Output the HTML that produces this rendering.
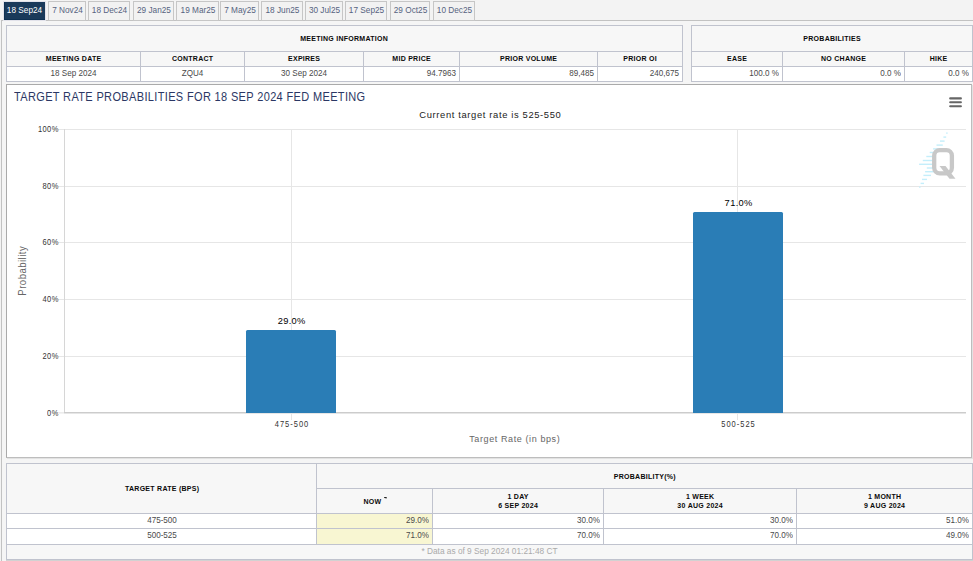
<!DOCTYPE html><html><head><meta charset="utf-8"><style>html,body{margin:0;padding:0;}body{width:973px;height:561px;overflow:hidden;position:relative;background:#f3f3f3;font-family:"Liberation Sans",sans-serif;}div{box-sizing:border-box}</style></head><body>
<div style="position:absolute;left:1px;top:20px;width:1000px;height:581px;border:1px solid #c2c2c2;background:#f5f5f5"></div>
<div style="position:absolute;left:3px;top:1px;width:43px;height:20px;background:#e2e2ea"></div>
<div style="position:absolute;left:4px;top:2px;width:41px;height:18px;background:#1a3a5a;border-left:1px solid #0f3152;border-bottom:1px solid #0f3152"></div>
<div style="position:absolute;left:-475.50px;width:1000px;text-align:center;top:5.90px;font-size:8.25px;line-height:9.479px;font-weight:normal;white-space:nowrap;letter-spacing:0px;transform:scale(1.0,1.05);transform-origin:50% 7.60px;color:#fff">18 Sep24</div>
<div style="position:absolute;left:48px;top:1px;width:38px;height:20px;border:1px solid #c6c6c6;background:#f2f2f2"></div>
<div style="position:absolute;left:-432.50px;width:1000px;text-align:center;top:5.90px;font-size:8.25px;line-height:9.479px;font-weight:normal;white-space:nowrap;letter-spacing:0px;transform:scale(1.0,1.05);transform-origin:50% 7.60px;color:#56637f">7 Nov24</div>
<div style="position:absolute;left:88px;top:1px;width:42px;height:20px;border:1px solid #c6c6c6;background:#f2f2f2"></div>
<div style="position:absolute;left:-390.50px;width:1000px;text-align:center;top:5.90px;font-size:8.25px;line-height:9.479px;font-weight:normal;white-space:nowrap;letter-spacing:0px;transform:scale(1.0,1.05);transform-origin:50% 7.60px;color:#56637f">18 Dec24</div>
<div style="position:absolute;left:133px;top:1px;width:41px;height:20px;border:1px solid #c6c6c6;background:#f2f2f2"></div>
<div style="position:absolute;left:-346.00px;width:1000px;text-align:center;top:5.90px;font-size:8.25px;line-height:9.479px;font-weight:normal;white-space:nowrap;letter-spacing:0px;transform:scale(1.0,1.05);transform-origin:50% 7.60px;color:#56637f">29 Jan25</div>
<div style="position:absolute;left:176px;top:1px;width:43px;height:20px;border:1px solid #c6c6c6;background:#f2f2f2"></div>
<div style="position:absolute;left:-302.00px;width:1000px;text-align:center;top:5.90px;font-size:8.25px;line-height:9.479px;font-weight:normal;white-space:nowrap;letter-spacing:0px;transform:scale(1.0,1.05);transform-origin:50% 7.60px;color:#56637f">19 Mar25</div>
<div style="position:absolute;left:220px;top:1px;width:39px;height:20px;border:1px solid #c6c6c6;background:#f2f2f2"></div>
<div style="position:absolute;left:-260.00px;width:1000px;text-align:center;top:5.90px;font-size:8.25px;line-height:9.479px;font-weight:normal;white-space:nowrap;letter-spacing:0px;transform:scale(1.0,1.05);transform-origin:50% 7.60px;color:#56637f">7 May25</div>
<div style="position:absolute;left:261px;top:1px;width:42px;height:20px;border:1px solid #c6c6c6;background:#f2f2f2"></div>
<div style="position:absolute;left:-217.50px;width:1000px;text-align:center;top:5.90px;font-size:8.25px;line-height:9.479px;font-weight:normal;white-space:nowrap;letter-spacing:0px;transform:scale(1.0,1.05);transform-origin:50% 7.60px;color:#56637f">18 Jun25</div>
<div style="position:absolute;left:305px;top:1px;width:38px;height:20px;border:1px solid #c6c6c6;background:#f2f2f2"></div>
<div style="position:absolute;left:-175.50px;width:1000px;text-align:center;top:5.90px;font-size:8.25px;line-height:9.479px;font-weight:normal;white-space:nowrap;letter-spacing:0px;transform:scale(1.0,1.05);transform-origin:50% 7.60px;color:#56637f">30 Jul25</div>
<div style="position:absolute;left:345px;top:1px;width:42px;height:20px;border:1px solid #c6c6c6;background:#f2f2f2"></div>
<div style="position:absolute;left:-133.50px;width:1000px;text-align:center;top:5.90px;font-size:8.25px;line-height:9.479px;font-weight:normal;white-space:nowrap;letter-spacing:0px;transform:scale(1.0,1.05);transform-origin:50% 7.60px;color:#56637f">17 Sep25</div>
<div style="position:absolute;left:390px;top:1px;width:40px;height:20px;border:1px solid #c6c6c6;background:#f2f2f2"></div>
<div style="position:absolute;left:-89.50px;width:1000px;text-align:center;top:5.90px;font-size:8.25px;line-height:9.479px;font-weight:normal;white-space:nowrap;letter-spacing:0px;transform:scale(1.0,1.05);transform-origin:50% 7.60px;color:#56637f">29 Oct25</div>
<div style="position:absolute;left:433px;top:1px;width:42px;height:20px;border:1px solid #c6c6c6;background:#f2f2f2"></div>
<div style="position:absolute;left:-45.50px;width:1000px;text-align:center;top:5.90px;font-size:8.25px;line-height:9.479px;font-weight:normal;white-space:nowrap;letter-spacing:0px;transform:scale(1.0,1.05);transform-origin:50% 7.60px;color:#56637f">10 Dec25</div>
<div style="position:absolute;left:6px;top:25px;width:677px;height:57px;border:1px solid #c0c3ce;background:#f7f7f7"></div>
<div style="position:absolute;left:7px;top:67px;width:675px;height:14px;background:#fff"></div>
<div style="position:absolute;left:6px;top:51px;width:677px;height:1px;background:#c0c3ce"></div>
<div style="position:absolute;left:6px;top:66px;width:677px;height:1px;background:#c0c3ce"></div>
<div style="position:absolute;left:140px;top:51px;width:1px;height:31px;background:#c0c3ce"></div>
<div style="position:absolute;left:244px;top:51px;width:1px;height:31px;background:#c0c3ce"></div>
<div style="position:absolute;left:363px;top:51px;width:1px;height:31px;background:#c0c3ce"></div>
<div style="position:absolute;left:459px;top:51px;width:1px;height:31px;background:#c0c3ce"></div>
<div style="position:absolute;left:597px;top:51px;width:1px;height:31px;background:#c0c3ce"></div>
<div style="position:absolute;left:-155.87px;width:1000px;text-align:center;top:35.05px;font-size:7px;line-height:8.043px;font-weight:bold;white-space:nowrap;letter-spacing:0.27px;color:#0a0a0a">MEETING INFORMATION</div>
<div style="position:absolute;left:-426.37px;width:1000px;text-align:center;top:55.05px;font-size:7px;line-height:8.043px;font-weight:bold;white-space:nowrap;letter-spacing:0.27px;color:#0a0a0a">MEETING DATE</div>
<div style="position:absolute;left:-426.50px;width:1000px;text-align:center;top:69.04px;font-size:8.1px;line-height:9.307px;font-weight:normal;white-space:nowrap;letter-spacing:0px;transform:scale(1.0,1.06);transform-origin:50% 7.46px;color:#4a4a4a">18 Sep 2024</div>
<div style="position:absolute;left:-307.37px;width:1000px;text-align:center;top:55.05px;font-size:7px;line-height:8.043px;font-weight:bold;white-space:nowrap;letter-spacing:0.27px;color:#0a0a0a">CONTRACT</div>
<div style="position:absolute;left:-307.50px;width:1000px;text-align:center;top:69.04px;font-size:8.1px;line-height:9.307px;font-weight:normal;white-space:nowrap;letter-spacing:0px;transform:scale(1.0,1.06);transform-origin:50% 7.46px;color:#4a4a4a">ZQU4</div>
<div style="position:absolute;left:-195.87px;width:1000px;text-align:center;top:55.05px;font-size:7px;line-height:8.043px;font-weight:bold;white-space:nowrap;letter-spacing:0.27px;color:#0a0a0a">EXPIRES</div>
<div style="position:absolute;left:-196.00px;width:1000px;text-align:center;top:69.04px;font-size:8.1px;line-height:9.307px;font-weight:normal;white-space:nowrap;letter-spacing:0px;transform:scale(1.0,1.06);transform-origin:50% 7.46px;color:#4a4a4a">30 Sep 2024</div>
<div style="position:absolute;left:-88.36px;width:1000px;text-align:center;top:55.05px;font-size:7px;line-height:8.043px;font-weight:bold;white-space:nowrap;letter-spacing:0.27px;color:#0a0a0a">MID PRICE</div>
<div style="position:absolute;right:517.00px;top:69.04px;font-size:8.1px;line-height:9.307px;font-weight:normal;white-space:nowrap;letter-spacing:0px;transform:scale(1.0,1.06);transform-origin:100% 7.46px;color:#4a4a4a">94.7963</div>
<div style="position:absolute;left:28.64px;width:1000px;text-align:center;top:55.05px;font-size:7px;line-height:8.043px;font-weight:bold;white-space:nowrap;letter-spacing:0.27px;color:#0a0a0a">PRIOR VOLUME</div>
<div style="position:absolute;right:379.00px;top:69.04px;font-size:8.1px;line-height:9.307px;font-weight:normal;white-space:nowrap;letter-spacing:0px;transform:scale(1.0,1.06);transform-origin:100% 7.46px;color:#4a4a4a">89,485</div>
<div style="position:absolute;left:140.13px;width:1000px;text-align:center;top:55.05px;font-size:7px;line-height:8.043px;font-weight:bold;white-space:nowrap;letter-spacing:0.27px;color:#0a0a0a">PRIOR OI</div>
<div style="position:absolute;right:294.00px;top:69.04px;font-size:8.1px;line-height:9.307px;font-weight:normal;white-space:nowrap;letter-spacing:0px;transform:scale(1.0,1.06);transform-origin:100% 7.46px;color:#4a4a4a">240,675</div>
<div style="position:absolute;left:691px;top:25px;width:282px;height:57px;border:1px solid #c0c3ce;background:#f7f7f7"></div>
<div style="position:absolute;left:692px;top:67px;width:280px;height:14px;background:#fff"></div>
<div style="position:absolute;left:691px;top:51px;width:282px;height:1px;background:#c0c3ce"></div>
<div style="position:absolute;left:691px;top:66px;width:282px;height:1px;background:#c0c3ce"></div>
<div style="position:absolute;left:782px;top:51px;width:1px;height:31px;background:#c0c3ce"></div>
<div style="position:absolute;left:904px;top:51px;width:1px;height:31px;background:#c0c3ce"></div>
<div style="position:absolute;left:332.13px;width:1000px;text-align:center;top:35.05px;font-size:7px;line-height:8.043px;font-weight:bold;white-space:nowrap;letter-spacing:0.27px;color:#0a0a0a">PROBABILITIES</div>
<div style="position:absolute;left:237.13px;width:1000px;text-align:center;top:55.05px;font-size:7px;line-height:8.043px;font-weight:bold;white-space:nowrap;letter-spacing:0.27px;color:#0a0a0a">EASE</div>
<div style="position:absolute;right:194.00px;top:69.04px;font-size:8.1px;line-height:9.307px;font-weight:normal;white-space:nowrap;letter-spacing:0px;transform:scale(1.0,1.06);transform-origin:100% 7.46px;color:#4a4a4a">100.0 %</div>
<div style="position:absolute;left:343.63px;width:1000px;text-align:center;top:55.05px;font-size:7px;line-height:8.043px;font-weight:bold;white-space:nowrap;letter-spacing:0.27px;color:#0a0a0a">NO CHANGE</div>
<div style="position:absolute;right:72.00px;top:69.04px;font-size:8.1px;line-height:9.307px;font-weight:normal;white-space:nowrap;letter-spacing:0px;transform:scale(1.0,1.06);transform-origin:100% 7.46px;color:#4a4a4a">0.0 %</div>
<div style="position:absolute;left:438.63px;width:1000px;text-align:center;top:55.05px;font-size:7px;line-height:8.043px;font-weight:bold;white-space:nowrap;letter-spacing:0.27px;color:#0a0a0a">HIKE</div>
<div style="position:absolute;right:4.00px;top:69.04px;font-size:8.1px;line-height:9.307px;font-weight:normal;white-space:nowrap;letter-spacing:0px;transform:scale(1.0,1.06);transform-origin:100% 7.46px;color:#4a4a4a">0.0 %</div>
<div style="position:absolute;left:6px;top:84px;width:966px;height:374px;border:1px solid #aaaaaa;border-right-color:#bdbdbd;border-bottom-color:#bdbdbd;background:#fff"></div>
<div style="position:absolute;left:7px;top:458px;width:966px;height:1px;background:#e2e2e2"></div>
<div style="position:absolute;left:972px;top:85px;width:1px;height:374px;background:#e2e2e2"></div>
<div style="position:absolute;left:14px;top:91.37px;font-size:11px;line-height:12.639px;font-weight:normal;white-space:nowrap;letter-spacing:0.35px;transform:scale(1.0,1.13);transform-origin:0 10.13px;color:#2b3764">TARGET RATE PROBABILITIES FOR 18 SEP 2024 FED MEETING</div>
<svg style="position:absolute;left:940px;top:90px" width="30" height="25"><line x1="10.2" y1="8.400000000000006" x2="20.9" y2="8.400000000000006" stroke="#666" stroke-width="2.1" stroke-linecap="round"/><line x1="10.2" y1="12.299999999999997" x2="20.9" y2="12.299999999999997" stroke="#666" stroke-width="2.1" stroke-linecap="round"/><line x1="10.2" y1="16.200000000000003" x2="20.9" y2="16.200000000000003" stroke="#666" stroke-width="2.1" stroke-linecap="round"/></svg>
<div style="position:absolute;left:-9.68px;width:1000px;text-align:center;top:109.84px;font-size:9.4px;line-height:10.801px;font-weight:normal;white-space:nowrap;letter-spacing:0.64px;transform:scale(1.0,1.04);transform-origin:50% 8.66px;color:#222">Current target rate is 525-550</div>
<div style="position:absolute;left:58px;top:129px;width:908px;height:1px;background:#e6e6e6"></div>
<div style="position:absolute;right:914.35px;top:125.59px;font-size:7.5px;line-height:8.617px;font-weight:normal;white-space:nowrap;letter-spacing:0.35px;transform:scale(1.0,1.15);transform-origin:100% 6.91px;color:#333">100%</div>
<div style="position:absolute;left:58px;top:186px;width:908px;height:1px;background:#e6e6e6"></div>
<div style="position:absolute;right:914.35px;top:182.59px;font-size:7.5px;line-height:8.617px;font-weight:normal;white-space:nowrap;letter-spacing:0.35px;transform:scale(1.0,1.15);transform-origin:100% 6.91px;color:#333">80%</div>
<div style="position:absolute;left:58px;top:242px;width:908px;height:1px;background:#e6e6e6"></div>
<div style="position:absolute;right:914.35px;top:238.59px;font-size:7.5px;line-height:8.617px;font-weight:normal;white-space:nowrap;letter-spacing:0.35px;transform:scale(1.0,1.15);transform-origin:100% 6.91px;color:#333">60%</div>
<div style="position:absolute;left:58px;top:299px;width:908px;height:1px;background:#e6e6e6"></div>
<div style="position:absolute;right:914.35px;top:295.59px;font-size:7.5px;line-height:8.617px;font-weight:normal;white-space:nowrap;letter-spacing:0.35px;transform:scale(1.0,1.15);transform-origin:100% 6.91px;color:#333">40%</div>
<div style="position:absolute;left:58px;top:356px;width:908px;height:1px;background:#e6e6e6"></div>
<div style="position:absolute;right:914.35px;top:352.59px;font-size:7.5px;line-height:8.617px;font-weight:normal;white-space:nowrap;letter-spacing:0.35px;transform:scale(1.0,1.15);transform-origin:100% 6.91px;color:#333">20%</div>
<div style="position:absolute;right:914.35px;top:409.59px;font-size:7.5px;line-height:8.617px;font-weight:normal;white-space:nowrap;letter-spacing:0.35px;transform:scale(1.0,1.15);transform-origin:100% 6.91px;color:#333">0%</div>
<div style="position:absolute;left:291px;top:129px;width:1px;height:291px;background:#e6e6e6"></div>
<div style="position:absolute;left:737px;top:129px;width:1px;height:291px;background:#e6e6e6"></div>
<div style="position:absolute;left:64px;top:129px;width:1px;height:284px;background:#d6d6d6"></div>
<div style="position:absolute;left:58px;top:412px;width:6px;height:1px;background:#ececec"></div>
<div style="position:absolute;left:58px;top:413px;width:6px;height:1px;background:#f3f3f3"></div>
<div style="position:absolute;left:64px;top:412px;width:902px;height:1px;background:#cccccc"></div>
<div style="position:absolute;left:64px;top:413px;width:902px;height:1px;background:#e6e6e6"></div>
<div style="position:absolute;left:246px;top:330px;width:90px;height:83px;background:#2a7db6;border-radius:1.5px 1.5px 0 0"></div>
<div style="position:absolute;left:693px;top:211.6px;width:90px;height:201.4px;background:#2a7db6;border-radius:1.5px 1.5px 0 0"></div>
<div style="position:absolute;left:-208.32px;width:1000px;text-align:center;top:315.93px;font-size:9.3px;line-height:10.686px;font-weight:normal;white-space:nowrap;letter-spacing:0.35px;transform:scale(1.0,1.07);transform-origin:50% 8.57px;color:#000">29.0%</div>
<div style="position:absolute;left:238.68px;width:1000px;text-align:center;top:197.93px;font-size:9.3px;line-height:10.686px;font-weight:normal;white-space:nowrap;letter-spacing:0.35px;transform:scale(1.0,1.07);transform-origin:50% 8.57px;color:#000">71.0%</div>
<div style="position:absolute;left:-208.00px;width:1000px;text-align:center;top:420.59px;font-size:7.5px;line-height:8.617px;font-weight:normal;white-space:nowrap;letter-spacing:1.0px;transform:scale(1.0,1.1);transform-origin:50% 6.91px;color:#333">475-500</div>
<div style="position:absolute;left:238.50px;width:1000px;text-align:center;top:420.59px;font-size:7.5px;line-height:8.617px;font-weight:normal;white-space:nowrap;letter-spacing:1.0px;transform:scale(1.0,1.1);transform-origin:50% 6.91px;color:#333">500-525</div>
<div style="position:absolute;left:14.80px;width:1000px;text-align:center;top:434.21px;font-size:9px;line-height:10.341px;font-weight:normal;white-space:nowrap;letter-spacing:0.6px;transform:scale(1.0,1.08);transform-origin:50% 8.29px;color:#666">Target Rate (in bps)</div>
<div style="position:absolute;left:27.3px;top:270.5px;width:0;height:0;"><div style="position:absolute;left:-100px;top:-8.7px;width:200px;height:11px;text-align:center;transform:rotate(-90deg) scaleY(1.12);transform-origin:100px 8.7px;font-size:9.5px;line-height:10.9px;color:#666;letter-spacing:0.5px;white-space:nowrap">Probability</div></div>
<svg style="position:absolute;left:0;top:0" width="973" height="561"><rect x="946.2" y="132.4" width="1.4" height="1.4" fill="#c4eefb"/><rect x="943.4" y="136.4" width="2.8" height="1.4" fill="#c4eefb"/><rect x="940.0" y="140.4" width="4.6" height="1.4" fill="#c4eefb"/><rect x="936.5" y="144.4" width="6.3" height="1.4" fill="#c4eefb"/><rect x="933.1" y="148.2" width="6.9" height="1.4" fill="#c4eefb"/><rect x="929.7" y="151.8" width="6.3" height="1.4" fill="#c4eefb"/><rect x="926.3" y="155.8" width="7.7" height="1.4" fill="#c4eefb"/><rect x="922.8" y="159.8" width="11.2" height="1.4" fill="#c4eefb"/><rect x="919.1" y="163.6" width="14.9" height="1.4" fill="#c4eefb"/><rect x="926.8" y="167.3" width="7.2" height="1.4" fill="#c4eefb"/><rect x="925.1" y="171.0" width="8.9" height="1.4" fill="#c4eefb"/><rect x="923.4" y="174.7" width="7.6" height="1.4" fill="#c4eefb"/><rect x="922.0" y="178.7" width="5.0" height="1.4" fill="#c4eefb"/><rect x="920.6" y="182.7" width="3.4" height="1.4" fill="#c4eefb"/><rect x="919.1" y="186.4" width="1.4" height="1.4" fill="#c4eefb"/><rect x="934.2" y="150.2" width="17.7" height="23.1" rx="5.5" ry="5.5" fill="none" stroke="#c8c8c8" stroke-width="4.3"/><polygon points="939.5,166 945.5,166 955.5,178.8 949.5,178.8" fill="#c8c8c8"/></svg>
<div style="position:absolute;left:6px;top:463px;width:967px;height:97px;border:1px solid #c0c3ce;background:#f7f7f7"></div>
<div style="position:absolute;left:7px;top:514px;width:965px;height:30px;background:#fff"></div>
<div style="position:absolute;left:317px;top:514px;width:115px;height:30px;background:#f8f6d2"></div>
<div style="position:absolute;left:316px;top:488px;width:657px;height:1px;background:#c0c3ce"></div>
<div style="position:absolute;left:6px;top:513px;width:967px;height:1px;background:#c0c3ce"></div>
<div style="position:absolute;left:6px;top:528px;width:967px;height:1px;background:#c0c3ce"></div>
<div style="position:absolute;left:6px;top:544px;width:967px;height:1px;background:#c0c3ce"></div>
<div style="position:absolute;left:316px;top:463px;width:1px;height:82px;background:#c0c3ce"></div>
<div style="position:absolute;left:432px;top:488px;width:1px;height:57px;background:#c0c3ce"></div>
<div style="position:absolute;left:603px;top:488px;width:1px;height:57px;background:#c0c3ce"></div>
<div style="position:absolute;left:796px;top:488px;width:1px;height:57px;background:#c0c3ce"></div>
<div style="position:absolute;left:-337.87px;width:1000px;text-align:center;top:485.05px;font-size:7px;line-height:8.043px;font-weight:bold;white-space:nowrap;letter-spacing:0.27px;color:#0a0a0a">TARGET RATE (BPS)</div>
<div style="position:absolute;left:144.84px;width:1000px;text-align:center;top:473.05px;font-size:7px;line-height:8.043px;font-weight:bold;white-space:nowrap;letter-spacing:0.27px;color:#0a0a0a">PROBABILITY(%)</div>
<div style="position:absolute;left:-127.56px;width:1000px;text-align:center;top:498.05px;font-size:7px;line-height:8.043px;font-weight:bold;white-space:nowrap;letter-spacing:0.27px;color:#0a0a0a">NOW</div>
<svg style="position:absolute;left:380px;top:494px" width="10" height="8"><polygon points="4,3.1 6.7,2.9 6.7,4.4 4.3,3.9" fill="#222"/></svg>
<div style="position:absolute;left:18.14px;width:1000px;text-align:center;top:493.05px;font-size:7px;line-height:8.043px;font-weight:bold;white-space:nowrap;letter-spacing:0.27px;color:#0a0a0a">1 DAY</div>
<div style="position:absolute;left:18.14px;width:1000px;text-align:center;top:502.05px;font-size:7px;line-height:8.043px;font-weight:bold;white-space:nowrap;letter-spacing:0.27px;color:#0a0a0a">6 SEP 2024</div>
<div style="position:absolute;left:200.13px;width:1000px;text-align:center;top:493.05px;font-size:7px;line-height:8.043px;font-weight:bold;white-space:nowrap;letter-spacing:0.27px;color:#0a0a0a">1 WEEK</div>
<div style="position:absolute;left:200.13px;width:1000px;text-align:center;top:502.05px;font-size:7px;line-height:8.043px;font-weight:bold;white-space:nowrap;letter-spacing:0.27px;color:#0a0a0a">30 AUG 2024</div>
<div style="position:absolute;left:384.63px;width:1000px;text-align:center;top:493.05px;font-size:7px;line-height:8.043px;font-weight:bold;white-space:nowrap;letter-spacing:0.27px;color:#0a0a0a">1 MONTH</div>
<div style="position:absolute;left:384.63px;width:1000px;text-align:center;top:502.05px;font-size:7px;line-height:8.043px;font-weight:bold;white-space:nowrap;letter-spacing:0.27px;color:#0a0a0a">9 AUG 2024</div>
<div style="position:absolute;left:-338.00px;width:1000px;text-align:center;top:516.04px;font-size:8.1px;line-height:9.307px;font-weight:normal;white-space:nowrap;letter-spacing:0px;transform:scale(1.0,1.06);transform-origin:50% 7.46px;color:#4a4a4a">475-500</div>
<div style="position:absolute;right:544.00px;top:516.04px;font-size:8.1px;line-height:9.307px;font-weight:normal;white-space:nowrap;letter-spacing:0px;transform:scale(1.0,1.06);transform-origin:100% 7.46px;color:#4a4a4a">29.0%</div>
<div style="position:absolute;right:373.00px;top:516.04px;font-size:8.1px;line-height:9.307px;font-weight:normal;white-space:nowrap;letter-spacing:0px;transform:scale(1.0,1.06);transform-origin:100% 7.46px;color:#4a4a4a">30.0%</div>
<div style="position:absolute;right:180.00px;top:516.04px;font-size:8.1px;line-height:9.307px;font-weight:normal;white-space:nowrap;letter-spacing:0px;transform:scale(1.0,1.06);transform-origin:100% 7.46px;color:#4a4a4a">30.0%</div>
<div style="position:absolute;right:4.00px;top:516.04px;font-size:8.1px;line-height:9.307px;font-weight:normal;white-space:nowrap;letter-spacing:0px;transform:scale(1.0,1.06);transform-origin:100% 7.46px;color:#4a4a4a">51.0%</div>
<div style="position:absolute;left:-338.00px;width:1000px;text-align:center;top:531.04px;font-size:8.1px;line-height:9.307px;font-weight:normal;white-space:nowrap;letter-spacing:0px;transform:scale(1.0,1.06);transform-origin:50% 7.46px;color:#4a4a4a">500-525</div>
<div style="position:absolute;right:544.00px;top:531.04px;font-size:8.1px;line-height:9.307px;font-weight:normal;white-space:nowrap;letter-spacing:0px;transform:scale(1.0,1.06);transform-origin:100% 7.46px;color:#4a4a4a">71.0%</div>
<div style="position:absolute;right:373.00px;top:531.04px;font-size:8.1px;line-height:9.307px;font-weight:normal;white-space:nowrap;letter-spacing:0px;transform:scale(1.0,1.06);transform-origin:100% 7.46px;color:#4a4a4a">70.0%</div>
<div style="position:absolute;right:180.00px;top:531.04px;font-size:8.1px;line-height:9.307px;font-weight:normal;white-space:nowrap;letter-spacing:0px;transform:scale(1.0,1.06);transform-origin:100% 7.46px;color:#4a4a4a">70.0%</div>
<div style="position:absolute;right:4.00px;top:531.04px;font-size:8.1px;line-height:9.307px;font-weight:normal;white-space:nowrap;letter-spacing:0px;transform:scale(1.0,1.06);transform-origin:100% 7.46px;color:#4a4a4a">49.0%</div>
<div style="position:absolute;left:6px;top:560px;width:968px;height:1px;background:#d2d2d2"></div>
<div style="position:absolute;left:-10.50px;width:1000px;text-align:center;top:546.86px;font-size:8.3px;line-height:9.537px;font-weight:normal;white-space:nowrap;letter-spacing:0px;color:#aaa">* Data as of 9 Sep 2024 01:21:48 CT</div>
</body></html>
